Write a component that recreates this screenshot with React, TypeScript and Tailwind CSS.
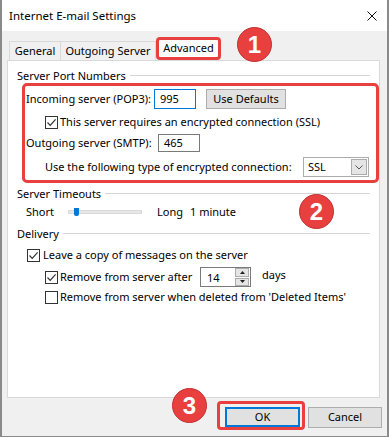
import React from 'react';

const Check = ({ checked }: { checked: boolean }) => (
  <div className="w-[13px] h-[13px] border border-[#333333] bg-white flex items-center justify-center shrink-0">
    {checked && (
      <svg width="11" height="11" viewBox="0 0 11 11">
        <path d="M1.5 5.5 L4.2 8.3 L9.6 2.4" fill="none" stroke="#333333" strokeWidth="1.2" />
      </svg>
    )}
  </div>
);

const GroupLabel = ({ text, className }: { text: string; className: string }) => (
  <div className={`flex items-center h-[16px] pl-[9px] pr-[9px] ${className}`}>
    <span className="leading-none">{text}</span>
    <div className="flex-1 h-px bg-[#d5d5d5] ml-[4px]" />
  </div>
);

const Badge = ({ n, className }: { n: string; className: string }) => (
  <div
    className={`absolute w-[35px] h-[35px] rounded-full bg-[#e8403f] border border-[#c22e2e] flex items-center justify-center text-white text-[24px] font-bold font-['Liberation_Sans'] leading-none ${className}`}
  >
    {n}
  </div>
);

export default function App() {
  return (
    <div className="w-[389px] h-[437px] relative flex flex-col bg-[#f0f0f0] border-x-2 border-b border-[#8a8a8a] font-['Noto_Sans',sans-serif] text-[11px] text-black whitespace-nowrap overflow-hidden">
      {/* Title bar */}
      <div className="h-[31px] bg-white flex items-center justify-between pl-[7px] pr-[10px] shrink-0 text-[11.5px]">
        <span>Internet E-mail Settings</span>
        <svg width="10" height="10" viewBox="0 0 10 10">
          <path d="M0.5 0.5 L9.5 9.5 M9.5 0.5 L0.5 9.5" stroke="#111" strokeWidth="1" />
        </svg>
      </div>

      {/* Tabs */}
      <div className="mt-[7px] h-[23px] flex items-end pl-[7px] relative z-10 -mb-px shrink-0">
        <div className="w-[52px] h-[20px] border border-b-0 border-[#d9d9d9] flex items-center justify-center">General</div>
        <div className="w-[95px] h-[20px] border border-l-0 border-b-0 border-[#d9d9d9] flex items-center justify-center">Outgoing Server</div>
        <div className="w-[65px] h-[23px] mb-px border-[3px] border-[#e8403f] rounded-[4px] bg-white flex items-center justify-center">Advanced</div>
      </div>

      {/* Panel */}
      <div className="ml-[5px] w-[373px] h-[338px] border border-[#d9d9d9] bg-white flex flex-col shrink-0">
        <GroupLabel text="Server Port Numbers" className="mt-[6px]" />

        <div className="ml-[14px] h-[100px] border-[3px] border-[#e8403f] rounded-[5px] flex flex-col pt-[3px]">
          <div className="flex items-center h-[20px]">
            <span className="w-[129px] pl-[1px]">Incoming server (POP3):</span>
            <div className="w-[42px] h-[20px] border border-[#0078d7] flex items-center pl-[5px]">995</div>
            <div className="ml-[10px] w-[80px] h-[20px] bg-[#e1e1e1] border border-[#adadad] flex items-center justify-center">Use Defaults</div>
          </div>
          <div className="flex items-center h-[12px] mt-[7px] pl-[20px] gap-[2px]">
            <Check checked />
            <span>This server requires an encrypted connection (SSL)</span>
          </div>
          <div className="flex items-center h-[18px] mt-[6px]">
            <span className="w-[133px] pl-[1px]">Outgoing server (SMTP):</span>
            <div className="w-[42px] h-[18px] border border-[#7a7a7a] flex items-center pl-[5px]">465</div>
          </div>
          <div className="flex items-center h-[20px] mt-[5px] pl-[20px]">
            <span className="w-[258px]">Use the following type of encrypted connection:</span>
            <div className="w-[66px] h-[20px] border border-[#acacac] flex items-center justify-between pl-[4px] pr-px">
              <span>SSL</span>
              <div className="w-[16px] h-[16px] bg-[#e5e5e5] border border-[#acacac] flex items-center justify-center">
                <svg width="8" height="5" viewBox="0 0 8 5">
                  <path d="M0.5 0.5 L4 4 L7.5 0.5" fill="none" stroke="#555" strokeWidth="1" />
                </svg>
              </div>
            </div>
          </div>
        </div>

        <GroupLabel text="Server Timeouts" className="mt-[2px]" />

        <div className="flex items-center h-[16px] mt-[3px] pl-[18px]">
          <span className="w-[42px]">Short</span>
          <div className="relative w-[74px] h-[4px] bg-[#e7e7e7] border border-[#dadada]">
            <div className="absolute left-[5px] -top-[3px] w-[5px] h-[8px] bg-[#0078d7] rounded-b-[2px]" />
          </div>
          <span className="ml-[15px]">Long</span>
          <span className="ml-[7px]">1 minute</span>
        </div>

        <GroupLabel text="Delivery" className="mt-[5px]" />

        <div className="flex items-center h-[16px] mt-[6px] pl-[19px] gap-[3px]">
          <Check checked />
          <span>Leave a copy of messages on the server</span>
        </div>
        <div className="flex items-center h-[20px] mt-[4px] pl-[37px]">
          <Check checked />
          <span className="ml-[2px] w-[140px]">Remove from server after</span>
          <div className="w-[51px] h-[20px] border border-[#7a7a7a] flex items-center justify-between">
            <span className="pl-[6px] pt-[2px]">14</span>
            <div className="w-[15px] h-[18px] flex flex-col gap-px pr-px">
              <div className="flex-1 bg-[#e5e5e5] border border-[#acacac] flex items-center justify-center">
                <svg width="5" height="3" viewBox="0 0 5 3"><path d="M0 3 L2.5 0 L5 3Z" fill="#222" /></svg>
              </div>
              <div className="flex-1 bg-[#e5e5e5] border border-[#acacac] flex items-center justify-center">
                <svg width="5" height="3" viewBox="0 0 5 3"><path d="M0 0 L2.5 3 L5 0Z" fill="#222" /></svg>
              </div>
            </div>
          </div>
          <span className="ml-[11px] -mt-[4px]">days</span>
        </div>
        <div className="flex items-center h-[16px] mt-[2px] pl-[37px] gap-[2px]">
          <Check checked={false} />
          <span>Remove from server when deleted from 'Deleted Items'</span>
        </div>
      </div>

      {/* Buttons */}
      <div className="flex items-start justify-end pr-[5px] mt-[3px] gap-[3px]">
        <div className="h-[29px] border-[3px] border-[#e8403f] rounded-[4px] pl-[5px] pr-[2px] pt-[3px]">
          <div className="w-[75px] h-[20px] bg-[#e1e1e1] border-2 border-[#0078d7] flex items-center justify-center">OK</div>
        </div>
        <div className="mt-[6px] w-[74px] h-[21px] bg-[#e1e1e1] border border-[#adadad] flex items-center justify-center">Cancel</div>
      </div>

      <Badge n="1" className="left-[235px] top-[27px]" />
      <Badge n="2" className="left-[297px] top-[194px]" />
      <Badge n="3" className="left-[170px] top-[388px]" />
    </div>
  );
}
